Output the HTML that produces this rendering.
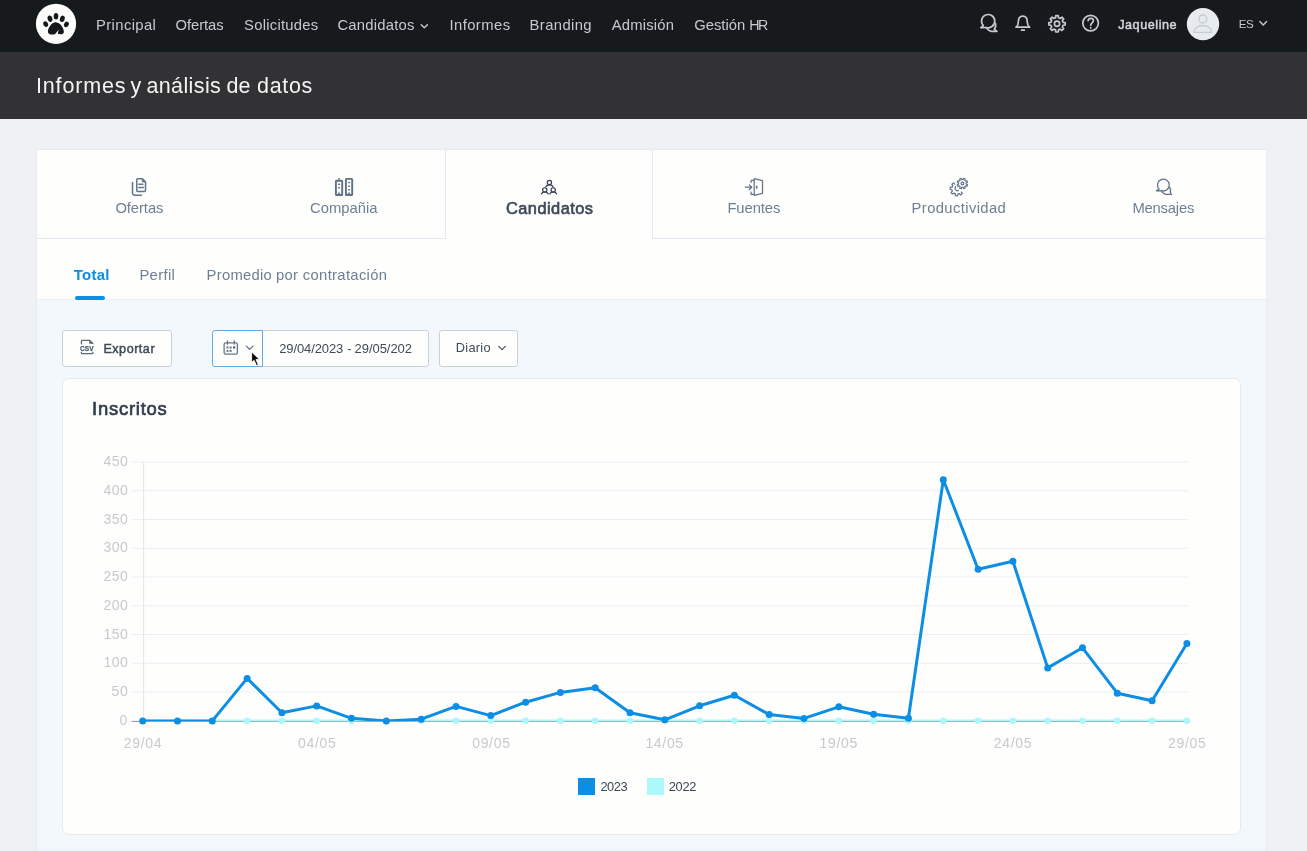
<!DOCTYPE html>
<html lang="es">
<head>
<meta charset="utf-8">
<title>Informes y análisis de datos</title>
<style>
html,body{margin:0;padding:0}
body{width:1307px;height:851px;overflow:hidden;background:#eef2f5;position:relative;font-family:"Liberation Sans",sans-serif}
.abs{position:absolute}
.t{position:absolute;white-space:pre;line-height:1;font-family:"Liberation Sans",sans-serif}
#hdr{left:0;top:0;width:1307px;height:52px;background:#161a1d}
#sub{left:0;top:52px;width:1307px;height:67px;background:#323234}
#card{left:36px;top:149px;width:1231px;height:720px;background:#fefefd;border:1px solid #e8ecf1;box-sizing:border-box}
#tabline{left:37px;top:238px;width:1229px;height:1px;background:#e4e8f2}
#acttab{left:445px;top:150px;width:208px;height:89px;background:#fefefd;border-left:1px solid #e4e8f2;border-right:1px solid #e4e8f2;box-sizing:border-box}
#blue{left:37px;top:300px;width:1229px;height:560px;background:#f2f8fc}
#subline{left:37px;top:299px;width:1229px;height:1px;background:#e9eef3}
#uline{left:75px;top:296px;width:30px;height:4px;border-radius:2px;background:#0d8ee5}
.btn{position:absolute;top:330px;height:37px;box-sizing:border-box;background:#fefefd;border:1px solid #c9d0d8;border-radius:3px}
#chartcard{left:62px;top:378px;width:1179px;height:457px;box-sizing:border-box;background:#fefefd;border:1px solid #e6eaef;border-radius:7px}
svg{position:absolute;left:0;top:0;overflow:visible;will-change:transform}
#txt{position:absolute;left:0;top:0;width:1307px;height:851px;will-change:transform}
</style>
</head>
<body>
<div class="abs" id="hdr"></div>
<div class="abs" id="sub"></div>
<div class="abs" id="card"></div>
<div class="abs" id="tabline"></div>
<div class="abs" id="acttab"></div>
<div class="abs" id="blue"></div>
<div class="abs" id="subline"></div>
<div class="abs" style="left:37px;top:848px;width:1229px;height:3px;background:#eff4fc"></div>
<div class="abs" id="uline"></div>
<div class="btn" style="left:62px;width:110px"></div>
<div class="btn" style="left:262px;width:167px;border-radius:0 3px 3px 0"></div>
<div class="btn" style="left:212px;width:51px;border-color:#5eabe8;border-radius:3px 0 0 3px"></div>
<div class="btn" style="left:439px;width:79px"></div>
<div class="abs" id="chartcard"></div>
<div class="abs" style="left:578px;top:778px;width:17px;height:17px;background:#0d8ee5"></div>
<div class="abs" style="left:647px;top:778px;width:17px;height:17px;background:#adf8fb"></div>

<svg width="1307" height="851" viewBox="0 0 1307 851">
<line x1="131.5" x2="1188" y1="462" y2="462" stroke="#ebedf1" stroke-width="1.1"/>
<line x1="131.5" x2="1188" y1="490.75" y2="490.75" stroke="#ebedf1" stroke-width="1.1"/>
<line x1="131.5" x2="1188" y1="519.5" y2="519.5" stroke="#ebedf1" stroke-width="1.1"/>
<line x1="131.5" x2="1188" y1="548.25" y2="548.25" stroke="#ebedf1" stroke-width="1.1"/>
<line x1="131.5" x2="1188" y1="577" y2="577" stroke="#ebedf1" stroke-width="1.1"/>
<line x1="131.5" x2="1188" y1="605.75" y2="605.75" stroke="#ebedf1" stroke-width="1.1"/>
<line x1="131.5" x2="1188" y1="634.5" y2="634.5" stroke="#ebedf1" stroke-width="1.1"/>
<line x1="131.5" x2="1188" y1="663.25" y2="663.25" stroke="#ebedf1" stroke-width="1.1"/>
<line x1="131.5" x2="1188" y1="692" y2="692" stroke="#ebedf1" stroke-width="1.1"/>
<line x1="131.5" x2="1188" y1="720.75" y2="720.75" stroke="#ebedf1" stroke-width="1.1"/>
<line x1="143.6" x2="143.6" y1="462" y2="721" stroke="#e6e8ee" stroke-width="1.1"/>
<line x1="131.5" x2="1188" y1="721.5" y2="721.5" stroke="#9aa0a7" stroke-width="1.1"/>
<clipPath id="ca"><rect x="120" y="440" width="1090" height="281.2"/></clipPath>
<line x1="142.7" x2="1186.9" y1="720.9" y2="720.9" stroke="#adf6fa" stroke-width="3" clip-path="url(#ca)"/>
<circle cx="142.7" cy="720.8" r="3.3" fill="#adf6fa"/>
<circle cx="177.5" cy="720.8" r="3.3" fill="#adf6fa"/>
<circle cx="212.3" cy="720.8" r="3.3" fill="#adf6fa"/>
<circle cx="247.1" cy="720.8" r="3.3" fill="#adf6fa"/>
<circle cx="281.9" cy="720.8" r="3.3" fill="#adf6fa"/>
<circle cx="316.7" cy="720.8" r="3.3" fill="#adf6fa"/>
<circle cx="351.5" cy="720.8" r="3.3" fill="#adf6fa"/>
<circle cx="386.3" cy="720.8" r="3.3" fill="#adf6fa"/>
<circle cx="421.2" cy="720.8" r="3.3" fill="#adf6fa"/>
<circle cx="456" cy="720.8" r="3.3" fill="#adf6fa"/>
<circle cx="490.8" cy="720.8" r="3.3" fill="#adf6fa"/>
<circle cx="525.6" cy="720.8" r="3.3" fill="#adf6fa"/>
<circle cx="560.4" cy="720.8" r="3.3" fill="#adf6fa"/>
<circle cx="595.2" cy="720.8" r="3.3" fill="#adf6fa"/>
<circle cx="630" cy="720.8" r="3.3" fill="#adf6fa"/>
<circle cx="664.8" cy="720.8" r="3.3" fill="#adf6fa"/>
<circle cx="699.6" cy="720.8" r="3.3" fill="#adf6fa"/>
<circle cx="734.4" cy="720.8" r="3.3" fill="#adf6fa"/>
<circle cx="769.2" cy="720.8" r="3.3" fill="#adf6fa"/>
<circle cx="804" cy="720.8" r="3.3" fill="#adf6fa"/>
<circle cx="838.8" cy="720.8" r="3.3" fill="#adf6fa"/>
<circle cx="873.6" cy="720.8" r="3.3" fill="#adf6fa"/>
<circle cx="908.4" cy="720.8" r="3.3" fill="#adf6fa"/>
<circle cx="943.3" cy="720.8" r="3.3" fill="#adf6fa"/>
<circle cx="978.1" cy="720.8" r="3.3" fill="#adf6fa"/>
<circle cx="1012.9" cy="720.8" r="3.3" fill="#adf6fa"/>
<circle cx="1047.7" cy="720.8" r="3.3" fill="#adf6fa"/>
<circle cx="1082.5" cy="720.8" r="3.3" fill="#adf6fa"/>
<circle cx="1117.3" cy="720.8" r="3.3" fill="#adf6fa"/>
<circle cx="1152.1" cy="720.8" r="3.3" fill="#adf6fa"/>
<circle cx="1186.9" cy="720.8" r="3.3" fill="#adf6fa"/>
<polyline points="142.7,720.9 177.5,720.9 212.3,720.9 247.1,678.4 281.9,712.7 316.7,705.9 351.5,718.3 386.3,720.9 421.2,719.2 456,706.4 490.8,715.6 525.6,702.2 560.4,692.4 595.2,687.8 630,712.8 664.8,719.8 699.6,705.8 734.4,695.2 769.2,714.6 804,718.4 838.8,706.8 873.6,714.2 908.4,718.3 943.3,479.7 978.1,569.2 1012.9,561.3 1047.7,667.9 1082.5,647.8 1117.3,693.2 1152.1,700.8 1186.9,643.5" fill="none" stroke="#0d8ee5" stroke-width="3" stroke-linejoin="round" stroke-linecap="round" clip-path="url(#ca)"/>
<circle cx="142.7" cy="720.9" r="3.5" fill="#0d8ee5"/>
<circle cx="177.5" cy="720.9" r="3.5" fill="#0d8ee5"/>
<circle cx="212.3" cy="720.9" r="3.5" fill="#0d8ee5"/>
<circle cx="247.1" cy="678.4" r="3.5" fill="#0d8ee5"/>
<circle cx="281.9" cy="712.7" r="3.5" fill="#0d8ee5"/>
<circle cx="316.7" cy="705.9" r="3.5" fill="#0d8ee5"/>
<circle cx="351.5" cy="718.3" r="3.5" fill="#0d8ee5"/>
<circle cx="386.3" cy="720.9" r="3.5" fill="#0d8ee5"/>
<circle cx="421.2" cy="719.2" r="3.5" fill="#0d8ee5"/>
<circle cx="456" cy="706.4" r="3.5" fill="#0d8ee5"/>
<circle cx="490.8" cy="715.6" r="3.5" fill="#0d8ee5"/>
<circle cx="525.6" cy="702.2" r="3.5" fill="#0d8ee5"/>
<circle cx="560.4" cy="692.4" r="3.5" fill="#0d8ee5"/>
<circle cx="595.2" cy="687.8" r="3.5" fill="#0d8ee5"/>
<circle cx="630" cy="712.8" r="3.5" fill="#0d8ee5"/>
<circle cx="664.8" cy="719.8" r="3.5" fill="#0d8ee5"/>
<circle cx="699.6" cy="705.8" r="3.5" fill="#0d8ee5"/>
<circle cx="734.4" cy="695.2" r="3.5" fill="#0d8ee5"/>
<circle cx="769.2" cy="714.6" r="3.5" fill="#0d8ee5"/>
<circle cx="804" cy="718.4" r="3.5" fill="#0d8ee5"/>
<circle cx="838.8" cy="706.8" r="3.5" fill="#0d8ee5"/>
<circle cx="873.6" cy="714.2" r="3.5" fill="#0d8ee5"/>
<circle cx="908.4" cy="718.3" r="3.5" fill="#0d8ee5"/>
<circle cx="943.3" cy="479.7" r="3.5" fill="#0d8ee5"/>
<circle cx="978.1" cy="569.2" r="3.5" fill="#0d8ee5"/>
<circle cx="1012.9" cy="561.3" r="3.5" fill="#0d8ee5"/>
<circle cx="1047.7" cy="667.9" r="3.5" fill="#0d8ee5"/>
<circle cx="1082.5" cy="647.8" r="3.5" fill="#0d8ee5"/>
<circle cx="1117.3" cy="693.2" r="3.5" fill="#0d8ee5"/>
<circle cx="1152.1" cy="700.8" r="3.5" fill="#0d8ee5"/>
<circle cx="1186.9" cy="643.5" r="3.5" fill="#0d8ee5"/>
<!-- logo -->
<circle cx="56" cy="23.8" r="20.1" fill="#fdfdfc"/>
<g fill="#15191c">
<ellipse cx="45.7" cy="24.1" rx="2.3" ry="2.9" transform="rotate(-28 45.7 24.1)"/>
<ellipse cx="50" cy="18.7" rx="2.4" ry="3.3" transform="rotate(-14 50 18.7)"/>
<ellipse cx="56" cy="16.2" rx="2.3" ry="3.3"/>
<ellipse cx="62.3" cy="18.8" rx="2.4" ry="3.3" transform="rotate(16 62.3 18.8)"/>
<ellipse cx="66.4" cy="24.4" rx="2.3" ry="2.9" transform="rotate(30 66.4 24.4)"/>
<path d="M55.6 22.3c3.2 0 5.3 2.2 6.8 5 1.2 2.2 1.7 4 1.4 5.1-.4 1.5-1.8 1.9-3.6 1.8-1.3-.1-2.2-.3-2.5-.6.1-1.4.700-2.8 1.5-4.2-1.6 1.3-2.9 3-4 4.5-.900.4-2.3.700-3.9.600-2.3-.1-3.5-1.3-3.4-3.5.100-1.8 1-3.5 2.3-5.3 1.4-2 3.2-3.4 5.4-3.4z"/>
</g>
<!-- nav chevrons -->
<g fill="none" stroke="#c6cacf" stroke-width="1.4" stroke-linecap="round" stroke-linejoin="round">
<path d="M421.2 24.7l3.1 3.1 3.1-3.1"/>
<path d="M1259.8 21.5l3.4 3.4 3.4-3.4"/>
</g>
<!-- header icons -->
<g fill="none" stroke="#c6cacf" stroke-width="1.7" stroke-linecap="round" stroke-linejoin="round">
<!-- chat -->
<path d="M983.3 25.6a6.6 6.6 0 1 1 3.1 1.9l-5.6 .1z"/>
<path d="M995.6 23.6a6.2 6.2 0 0 1 -1.3 5.5l2.6 2.3h-5.4a6.2 6.2 0 0 1 -4.6-3"/>
<!-- bell -->
<path d="M1016 27.2h13.6c-1.7-1.2-2.3-2.7-2.3-5.2 0-3.7-1.8-5.9-4.5-5.9s-4.5 2.2-4.5 5.9c0 2.5-.6 4-2.3 5.2z"/>
<path d="M1021.5 30.2h2.8"/>
<!-- help -->
<circle cx="1090.6" cy="23.1" r="7.8"/>
<path d="M1088.1 20.7c.2-1.6 1.3-2.4 2.7-2.4 1.5 0 2.6.9 2.6 2.3 0 2.2-2.7 2.3-2.7 4.7"/>
<path d="M1090.7 27.7v.2"/>
</g>
<!-- gear header -->
<g fill="none" stroke="#c6cacf" stroke-width="1.7" stroke-linejoin="round">
<circle cx="1057" cy="23.8" r="2.6"/>
<path id="gearH" d=""/>
</g>
<!-- avatar -->
<circle cx="1203" cy="24.1" r="16.2" fill="#e8ebee"/>
<g fill="none" stroke="#c4ccd4" stroke-width="1.4" stroke-linecap="round">
<circle cx="1202.8" cy="18.9" r="3.9"/>
<path d="M1193.9 32.4c.5-4.3 4.3-6.9 8.9-6.9s8.4 2.6 8.9 6.9z" stroke-linejoin="round"/>
</g>

<path d="M1063.02 22.31L1065.21 22.57L1065.21 25.03L1063.02 25.29L1062.31 27L1063.68 28.73L1061.93 30.48L1060.2 29.11L1058.49 29.82L1058.23 32.01L1055.77 32.01L1055.51 29.82L1053.8 29.11L1052.07 30.48L1050.32 28.73L1051.69 27L1050.98 25.29L1048.79 25.03L1048.79 22.57L1050.98 22.31L1051.69 20.6L1050.32 18.87L1052.07 17.12L1053.8 18.49L1055.51 17.78L1055.77 15.59L1058.23 15.59L1058.49 17.78L1060.2 18.49L1061.93 17.12L1063.68 18.87L1062.31 20.6Z" fill="none" stroke="#c6cacf" stroke-width="1.7" stroke-linejoin="round"/>
<g fill="none" stroke="#62758b" stroke-width="1.5" stroke-linecap="round" stroke-linejoin="round">
<path d="M137.7 178.8h4.7l3.1 3.1v8.6a.9.9 0 0 1-.9.9h-6.9a.9.9 0 0 1-.9-.9v-10.8a.9.9 0 0 1 .9-.9z"/>
<path d="M142.2 178.9v3.2h3.2z" fill="#62758b" stroke-width="0.6"/>
<path d="M138.9 184.3h3.9M138.9 187.5h4.5"/>
<path d="M132.5 182.5v10.4a2.3 2.3 0 0 0 2.3 2.3h6.6"/>
</g>
<g fill="none" stroke="#5d7188" stroke-width="1.9" stroke-linejoin="round">
<rect x="335.9" y="180.7" width="6.3" height="14.3" rx="0.6"/>
<rect x="345.9" y="178.9" width="6.3" height="16.1" rx="0.6"/>
<path d="M339.05 178v2.7" stroke-width="1.3"/>
</g>
<g fill="#62758b">
<rect x="338" y="183.5" width="2.1" height="1.5" rx=".6"/><rect x="338" y="187.1" width="2.1" height="1.5" rx=".6"/>
<rect x="338.1" y="192.6" width="1.9" height="2.4"/>
<rect x="348" y="181.7" width="2.1" height="1.5" rx=".6"/><rect x="348" y="185.4" width="2.1" height="1.5" rx=".6"/><rect x="348" y="189.1" width="2.1" height="1.5" rx=".6"/>
<rect x="348.1" y="192.6" width="1.9" height="2.4"/>
</g>
<g fill="none" stroke="#333f4f" stroke-width="1.2" stroke-linecap="round" stroke-linejoin="round">
<circle cx="549.4" cy="182.5" r="2.15"/>
<circle cx="544.8" cy="189.9" r="2.15"/>
<circle cx="553.2" cy="189.9" r="2.15"/>
<path d="M545.6 187c.6-1.3 2-2.1 3.8-2.1s3.2.8 3.8 2.1"/>
<path d="M541.3 194c.5-1.4 1.7-2.1 3.5-2.1s3 .7 3.5 2.1"/>
<path d="M549.7 194c.5-1.4 1.7-2.1 3.5-2.1s3 .7 3.5 2.1"/>
</g>
<g fill="none" stroke="#62758b" stroke-width="1.25" stroke-linecap="round" stroke-linejoin="round">
<path d="M754.2 178.7l8.3 2v12.7l-8.3 1.9z"/>
<path d="M754.2 180.3h-3.1v2.2M751.1 192.1v2.3h3.1"/>
<path d="M745.3 187.2h6.3M749.3 184.9l2.5 2.3-2.5 2.3"/>
<path d="M756.7 186.3v1.9" stroke-width="1.5"/>
</g>
<g fill="none" stroke="#62758b" stroke-width="1.25" stroke-linecap="round" stroke-linejoin="round">
<path d="M966.26 184.08L967.54 184.78L966.94 186.23L965.54 185.82L964.72 186.64L965.13 188.04L963.68 188.64L962.98 187.36L961.82 187.36L961.12 188.64L959.67 188.04L960.08 186.64L959.26 185.82L957.86 186.23L957.26 184.78L958.54 184.08L958.54 182.92L957.26 182.22L957.86 180.77L959.26 181.18L960.08 180.36L959.67 178.96L961.12 178.36L961.82 179.64L962.98 179.64L963.68 178.36L965.13 178.96L964.72 180.36L965.54 181.18L966.94 180.77L967.54 182.22L966.26 182.92Z"/>
<circle cx="962.4" cy="183.5" r="1.3"/>
<path d="M961.35 192.07L962.29 193.6L960.68 194.92L959.37 193.69L957.86 194.15L957.44 195.89L955.37 195.68L955.32 193.89L953.93 193.15L952.4 194.09L951.08 192.48L952.31 191.17L951.85 189.66L950.11 189.24L950.32 187.17L952.11 187.12L952.85 185.73L951.91 184.2L953.52 182.88L954.83 184.11"/>
<path d="M955.6 186.6a2.6 2.6 0 0 0 2.7 4.1"/>
</g>
<g fill="none" stroke="#62758b" stroke-width="1.3" stroke-linecap="round" stroke-linejoin="round">
<path d="M1159.1 189.1a5.9 5.9 0 1 1 2.6 1.6l-5.3 .1z"/>
<path d="M1169.7 187.4a5.2 5.2 0 0 1 .5 4.6l1.2 2.3h-4.9a5.4 5.4 0 0 1 -4.7-2.8"/>
</g>
<g fill="none" stroke="#5a6a7e" stroke-width="1.3" stroke-linecap="round" stroke-linejoin="round">
<path d="M81.4 343.8v-2.5a.9.9 0 0 1 .9-.9h7.3l3.2 3.1"/>
<path d="M89.5 340.5v3h3.2z" fill="#5a6a7e" stroke-width=".6"/>
<path d="M81.4 352.4v.4a.9.9 0 0 0 .9.9h9.7a.9.9 0 0 0 .9-.9v-.4"/>
</g>
<text x="80.1" y="350.95" font-family="Liberation Sans, sans-serif" font-size="7.1" font-weight="700" fill="#4d5b6e" stroke="#4d5b6e" stroke-width=".25" textLength="13.5" lengthAdjust="spacingAndGlyphs">CSV</text>
<g fill="none" stroke="#66768a" stroke-width="1.3" stroke-linecap="round" stroke-linejoin="round">
<rect x="224.1" y="342.8" width="13.3" height="11.4" rx="1.7"/>
<path d="M227.5 340.9v3.3M234.3 340.9v3.3"/>
<path d="M246.3 346.1l3.3 3.3 3.3-3.3"/>
</g>
<g fill="#66768a">
<rect x="226.5" y="346.5" width="2" height="2"/><rect x="229.6" y="346.5" width="2" height="2"/><rect x="233" y="346.3" width="2.3" height="2.3" fill="#56667a"/>
<rect x="226.5" y="349.9" width="2" height="2"/><rect x="229.6" y="349.9" width="2" height="2"/>
</g>
<path d="M498.7 346.4l3.35 3.2 3.35-3.2" fill="none" stroke="#4b5768" stroke-width="1.3" stroke-linecap="round" stroke-linejoin="round"/>
<path d="M251.6 351.9v10.7l2.5-2.3 2.3 5.3 1.9-.8-2.3-5.2h3.5z" fill="#0a0a0a" stroke="#fdfdfd" stroke-width="0.9" stroke-linejoin="round"/>
</svg>
<div id="txt">
<span class="t" style="left:96px;top:18.27px;font-size:14.8px;font-weight:400;color:#c6cacf;letter-spacing:0.394px">Principal</span>
<span class="t" style="left:175.6px;top:18.27px;font-size:14.8px;font-weight:400;color:#c6cacf;letter-spacing:-0.075px">Ofertas</span>
<span class="t" style="left:244px;top:18.27px;font-size:14.8px;font-weight:400;color:#c6cacf;letter-spacing:0.27px">Solicitudes</span>
<span class="t" style="left:337.4px;top:18.27px;font-size:14.8px;font-weight:400;color:#c6cacf;letter-spacing:0.25px">Candidatos</span>
<span class="t" style="left:449.4px;top:18.27px;font-size:14.8px;font-weight:400;color:#c6cacf;letter-spacing:0.45px">Informes</span>
<span class="t" style="left:529.6px;top:18.27px;font-size:14.8px;font-weight:400;color:#c6cacf;letter-spacing:0.386px">Branding</span>
<span class="t" style="left:611.8px;top:18.27px;font-size:14.8px;font-weight:400;color:#c6cacf;letter-spacing:0.193px">Admisión</span>
<span class="t" style="left:694.2px;top:18.27px;font-size:14.8px;font-weight:400;color:#c6cacf;letter-spacing:-0px">Gestión</span>
<span class="t" style="left:749.2px;top:17.78px;font-size:14.2px;font-weight:400;color:#c6cacf;letter-spacing:-1.35px">HR</span>
<span class="t" style="left:1118.2px;top:19.13px;font-size:12.6px;font-weight:400;color:#d3d6da;letter-spacing:0.562px;-webkit-text-stroke:0.48px #d3d6da">Jaqueline</span>
<span class="t" style="left:1238.8px;top:17.88px;font-size:11.6px;font-weight:400;color:#c6cacf;letter-spacing:-0.45px">ES</span>
<span class="t" style="left:36px;top:76.4px;font-size:21.5px;font-weight:400;color:#f4f4f4;letter-spacing:0.836px">Informes</span>
<span class="t" style="left:130.4px;top:76.4px;font-size:21.5px;font-weight:400;color:#f4f4f4;letter-spacing:0px">y</span>
<span class="t" style="left:146.4px;top:76.4px;font-size:21.5px;font-weight:400;color:#f4f4f4;letter-spacing:0.386px">análisis</span>
<span class="t" style="left:226.6px;top:76.4px;font-size:21.5px;font-weight:400;color:#f4f4f4;letter-spacing:0px">de</span>
<span class="t" style="left:257px;top:76.4px;font-size:21.5px;font-weight:400;color:#f4f4f4;letter-spacing:0.675px">datos</span>
<span class="t" style="left:115.4px;top:201.37px;font-size:14.8px;font-weight:400;color:#6e8093;letter-spacing:-0.075px">Ofertas</span>
<span class="t" style="left:310px;top:201.37px;font-size:14.8px;font-weight:400;color:#6e8093;letter-spacing:-0px">Compañia</span>
<span class="t" style="left:506px;top:199.72px;font-size:16.4px;font-weight:400;color:#3d4859;letter-spacing:0.45px;-webkit-text-stroke:0.62px #3d4859">Candidatos</span>
<span class="t" style="left:727.4px;top:201.37px;font-size:14.8px;font-weight:400;color:#6e8093;letter-spacing:-0.075px">Fuentes</span>
<span class="t" style="left:911.6px;top:201.37px;font-size:14.8px;font-weight:400;color:#6e8093;letter-spacing:0.375px">Productividad</span>
<span class="t" style="left:1132.4px;top:201.37px;font-size:14.8px;font-weight:400;color:#6e8093;letter-spacing:-0.193px">Mensajes</span>
<span class="t" style="left:73.8px;top:267.1px;font-size:15px;font-weight:700;color:#0d8ee5;letter-spacing:0.225px">Total</span>
<span class="t" style="left:139.4px;top:268.27px;font-size:14.8px;font-weight:400;color:#6e8093;letter-spacing:0.36px">Perfil</span>
<span class="t" style="left:206.6px;top:268.27px;font-size:14.8px;font-weight:400;color:#6e8093;letter-spacing:0.257px">Promedio</span>
<span class="t" style="left:276px;top:268.27px;font-size:14.8px;font-weight:400;color:#6e8093;letter-spacing:0.225px">por</span>
<span class="t" style="left:302.8px;top:268.27px;font-size:14.8px;font-weight:400;color:#6e8093;letter-spacing:0.327px">contratación</span>
<span class="t" style="left:103.4px;top:343.33px;font-size:12.6px;font-weight:400;color:#3f4a5b;letter-spacing:0.514px;-webkit-text-stroke:0.48px #3f4a5b">Exportar</span>
<span class="t" style="left:279.2px;top:342.1px;font-size:13px;font-weight:400;color:#3f4a5a;letter-spacing:-0.1px">29/04/2023</span>
<span class="t" style="left:347.2px;top:342.1px;font-size:13px;font-weight:400;color:#3f4a5a;letter-spacing:0px">-</span>
<span class="t" style="left:354.6px;top:342.1px;font-size:13px;font-weight:400;color:#3f4a5a;letter-spacing:-0.056px">29/05/202</span>
<span class="t" style="left:455.8px;top:342.16px;font-size:12.8px;font-weight:400;color:#3f4a5a;letter-spacing:0.27px">Diario</span>
<span class="t" style="left:92px;top:399.92px;font-size:18.4px;font-weight:400;color:#323d4e;letter-spacing:0.788px;-webkit-text-stroke:0.7px #323d4e">Inscritos</span>
<span class="t" style="left:600.4px;top:781.16px;font-size:12.8px;font-weight:400;color:#3a4556;letter-spacing:-0.45px">2023</span>
<span class="t" style="left:668.8px;top:781.16px;font-size:12.8px;font-weight:400;color:#3a4556;letter-spacing:-0.3px">2022</span>
<span class="t" style="left:103.6px;top:454.15px;font-size:14px;font-weight:400;color:#c6c9ce;letter-spacing:0.45px">450</span>
<span class="t" style="left:103.6px;top:482.9px;font-size:14px;font-weight:400;color:#c6c9ce;letter-spacing:0.45px">400</span>
<span class="t" style="left:103.6px;top:511.65px;font-size:14px;font-weight:400;color:#c6c9ce;letter-spacing:0.45px">350</span>
<span class="t" style="left:103.6px;top:540.4px;font-size:14px;font-weight:400;color:#c6c9ce;letter-spacing:0.45px">300</span>
<span class="t" style="left:103.6px;top:569.15px;font-size:14px;font-weight:400;color:#c6c9ce;letter-spacing:0.45px">250</span>
<span class="t" style="left:103.6px;top:597.9px;font-size:14px;font-weight:400;color:#c6c9ce;letter-spacing:0.45px">200</span>
<span class="t" style="left:103.6px;top:626.65px;font-size:14px;font-weight:400;color:#c6c9ce;letter-spacing:0.45px">150</span>
<span class="t" style="left:103.6px;top:655.4px;font-size:14px;font-weight:400;color:#c6c9ce;letter-spacing:0.45px">100</span>
<span class="t" style="left:111.4px;top:684.15px;font-size:14px;font-weight:400;color:#c6c9ce;letter-spacing:0.9px">50</span>
<span class="t" style="left:119.4px;top:712.9px;font-size:14px;font-weight:400;color:#c6c9ce;letter-spacing:0px">0</span>
<span class="t" style="left:123.8px;top:735.95px;font-size:14px;font-weight:400;color:#c6c9ce;letter-spacing:0.675px">29/04</span>
<span class="t" style="left:298px;top:735.95px;font-size:14px;font-weight:400;color:#c6c9ce;letter-spacing:0.675px">04/05</span>
<span class="t" style="left:472.2px;top:735.95px;font-size:14px;font-weight:400;color:#c6c9ce;letter-spacing:0.675px">09/05</span>
<span class="t" style="left:645.4px;top:735.95px;font-size:14px;font-weight:400;color:#c6c9ce;letter-spacing:0.675px">14/05</span>
<span class="t" style="left:819.6px;top:735.95px;font-size:14px;font-weight:400;color:#c6c9ce;letter-spacing:0.675px">19/05</span>
<span class="t" style="left:993.8px;top:735.95px;font-size:14px;font-weight:400;color:#c6c9ce;letter-spacing:0.675px">24/05</span>
<span class="t" style="left:1168px;top:735.95px;font-size:14px;font-weight:400;color:#c6c9ce;letter-spacing:0.675px">29/05</span>
</div>
</body>
</html>
